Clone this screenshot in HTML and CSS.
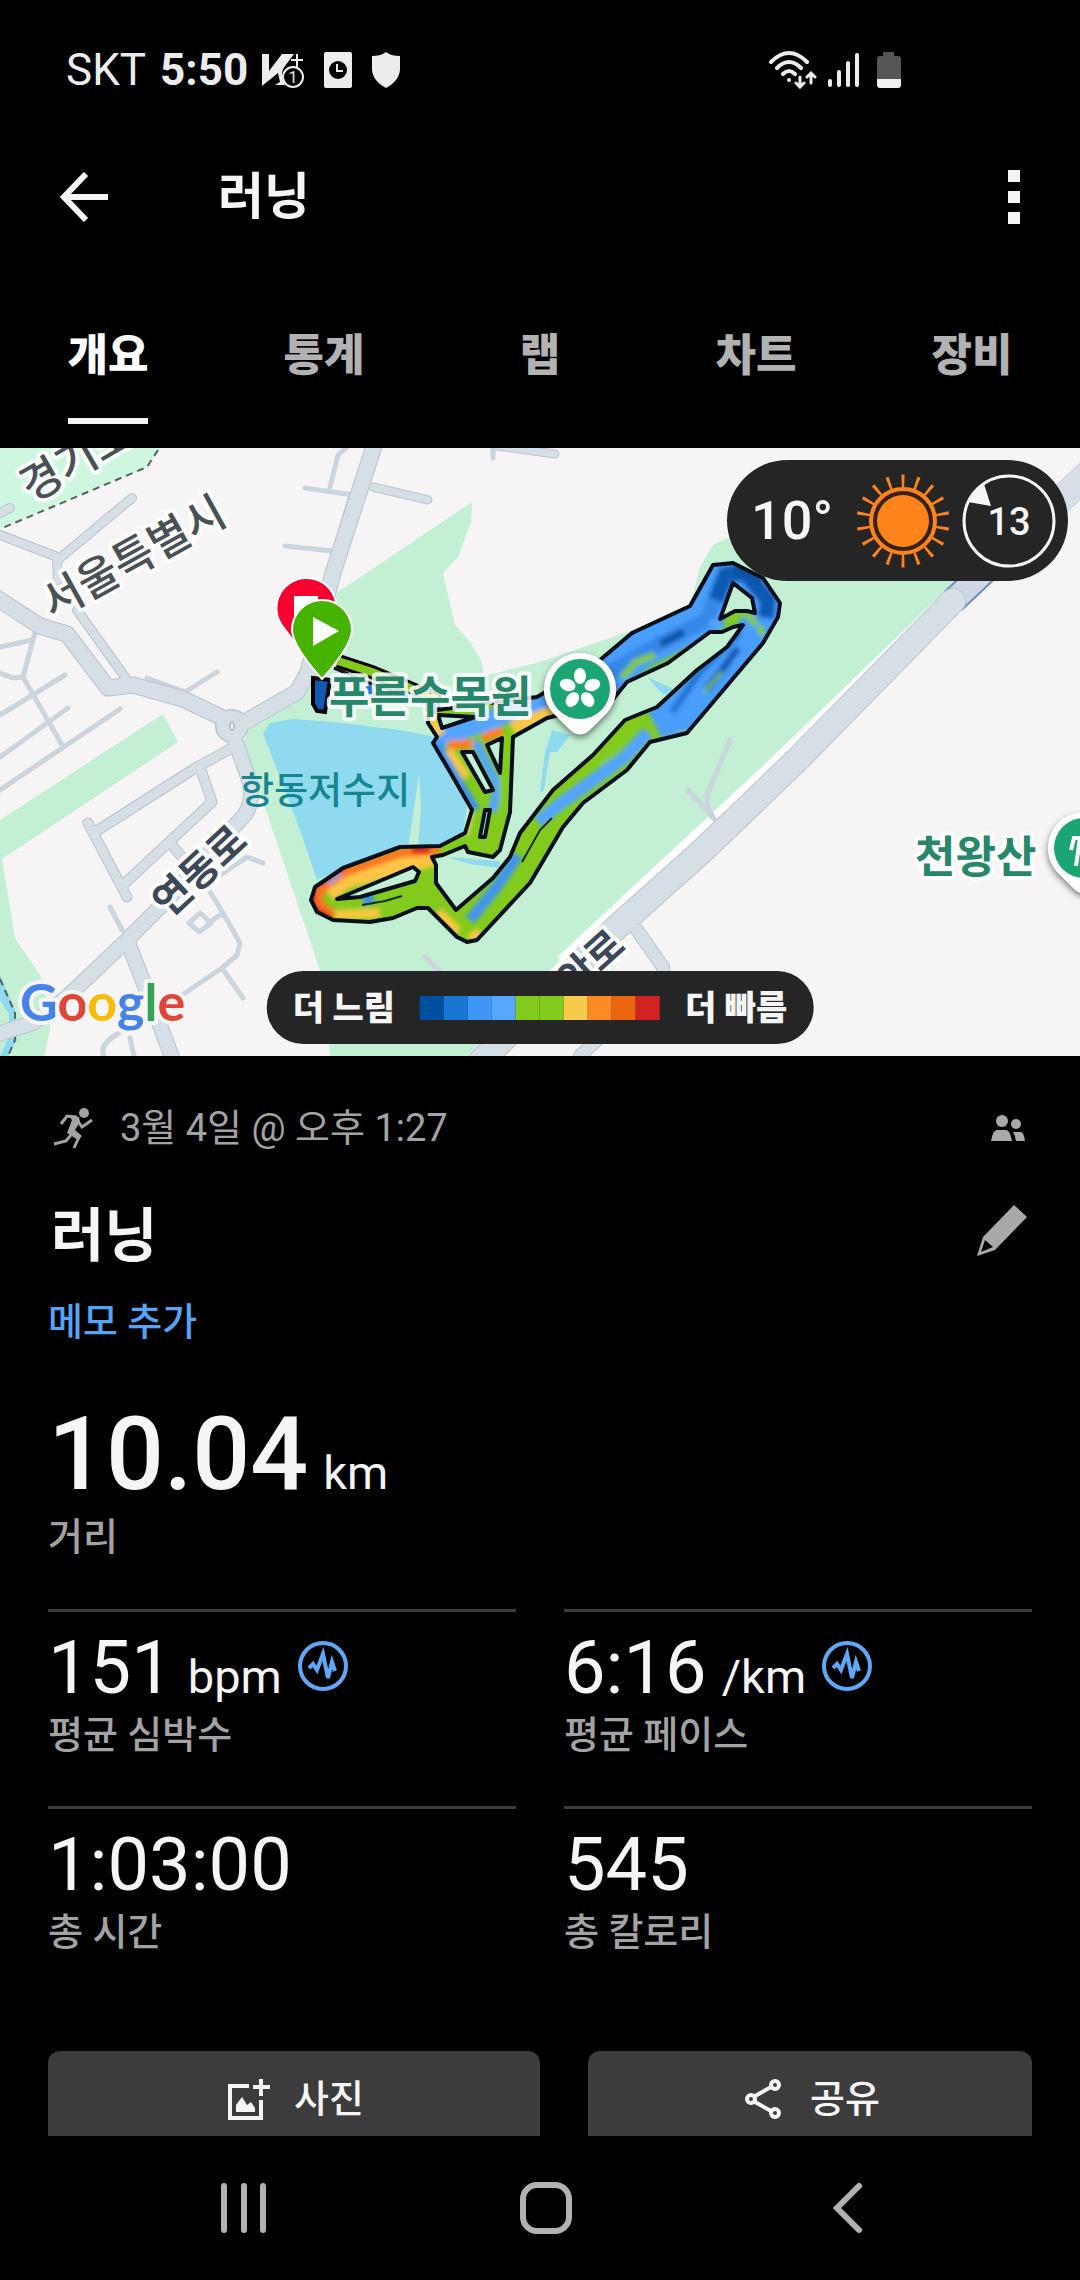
FILE: index.html
```html
<!DOCTYPE html>
<html lang="ko">
<head>
  <meta charset="utf-8">
  <meta name="viewport" content="width=device-width, initial-scale=1">
  <title>러닝</title>
  <link rel="stylesheet" href="styles.css">
</head>
<body>
  <div class="status-bar">
    <span class="carrier">SKT</span>
    <span class="clock">5:50</span>
    <svg class="status-icon" width="42" height="36" viewBox="0 0 42 36">
      <path d="M0 2h7v17L20 2h12L23 14c-3 4-4 9-2 14l2 5H13l5-3-2-9L0 34z" fill="#ececec"/>
      <path d="M35 2v13M29 8h12" stroke="#ececec" stroke-width="2"/>
      <circle cx="31" cy="25" r="10" fill="#000" stroke="#ececec" stroke-width="2"/>
      <text class="badge-text" x="31" y="31">1</text>
    </svg>
    <svg class="status-icon" width="28" height="36" viewBox="0 0 28 36">
      <rect width="28" height="36" rx="2" fill="#ececec"/>
      <circle cx="14" cy="18" r="9" fill="#000"/>
      <path d="M13 12v7h6" fill="none" stroke="#ececec" stroke-width="2"/>
    </svg>
    <svg class="status-icon" width="28" height="36" viewBox="0 0 28 36">
      <path d="M14 0c4 3 9 4 14 4v13c0 8-6 15-14 19C6 32 0 25 0 17V4c5 0 10-1 14-4z" fill="#ececec"/>
    </svg>
    <div class="status-right">
      <svg width="48" height="38" viewBox="0 0 48 38">
        <g fill="none" stroke="#ececec" stroke-width="4" stroke-linecap="round">
          <path d="M2 11Q20-7 38 11M8 17Q20 5 32 17M14 23Q20 17 26 23"/>
          <path d="M31 26v9M27 32l4 4 4-4M42 32V23M38 26l4-4 4 4" stroke-width="3"/>
        </g>
        <circle cx="20" cy="29" r="2" fill="#ececec"/>
      </svg>
      <svg width="34" height="38" viewBox="0 0 34 38">
        <path d="M3 30v4M12 21v13M21 12v22M30 4v30" stroke="#ececec" stroke-width="4" stroke-linecap="round"/>
      </svg>
      <svg class="battery" width="24" height="38" viewBox="0 0 24 38">
        <path d="M6 1h11v4h4q3 0 3 3v20H0V8q0-3 3-3h3z" fill="#555"/>
        <path d="M0 28h24v6q0 3-3 3H3q-3 0-3-3z" fill="#f0f0f0"/>
      </svg>
    </div>
  </div>

  <header class="app-bar">
    <button type="button" class="icon-btn" aria-label="뒤로">
      <svg width="48" height="50" viewBox="0 0 48 50">
        <path d="M26 2L4 25l22 23M4 25h44" fill="none" stroke="#f5f5f5" stroke-width="6"/>
      </svg>
    </button>
    <h1>러닝</h1>
    <button type="button" class="icon-btn" aria-label="메뉴">
      <svg width="12" height="54" viewBox="0 0 12 54">
        <path d="M0 0h12v12H0zM0 21h12v12H0zM0 42h12v12H0z" fill="#f5f5f5"/>
      </svg>
    </button>
  </header>

  <nav class="tabs">
    <a href="#overview" class="active">개요</a>
    <a href="#stats">통계</a>
    <a href="#laps">랩</a>
    <a href="#charts">차트</a>
    <a href="#gear">장비</a>
  </nav>

  <main>
    <div class="map">
      <svg class="map-canvas" viewBox="0 448 1080 608">
        <defs>
          <path id="route" clip-rule="evenodd" fill-rule="evenodd" d="M428 717L437 710L537 697L600 660L632 633L690 606L713 565L733 563L763 578L780 603L778 617L763 643L687 733L650 742L627 770L583 803L563 827L530 883L477 940L467 942L457 937L428 908L417 908L393 918L370 922L333 920L317 912L311 900L315 887L343 868L400 847L440 846L465 833L472 810L453 777L433 743L437 737L428 723Z
            M733 583L752 598L755 613L747 611L735 611L720 619Z
            M743 625L733 627L722 632L710 632L668 663L627 682L610 703L547 718L513 737L510 812L500 850L493 857L468 852L465 846L443 855L432 857L436 865L436 883L456 910L493 878L510 857L520 833L553 790L593 755L625 720L657 707L697 670L727 647Z
            M337 899L413 867L419 872L415 881L360 897Z M490 810L485 810L480 837L485 837Z
            M462 752L473 752L493 790L485 792Z M487 745L502 738L500 773Z M438 715L475 717L442 728Z"/>
          <clipPath id="routeClip"><use href="#route"/></clipPath>
          <filter id="blend" x="-5%" y="-5%" width="110%" height="110%"><feGaussianBlur stdDeviation="2"/></filter>
        </defs>

        <rect y="448" width="1080" height="608" fill="#f6f4f5"/>

        <!-- parks and water -->
        <path d="M0 448H160L157 454L147 467L0 529Z" fill="#cff6df"/>
        <path d="M163 714L178 742L2 859L15 938L40 975L50 1010V1030L44 1056H0V820Z" fill="#c3f0d4"/>
        <path d="M338 592L472 502L471 522L458 557L443 573L455 625L470 642L482 662L484 676L540 662L627 632L690 606L700 567L713 545L727 538L960 560V582L775 760L560 960L467 1056H330L320 970L243 743L253 723L300 698L312 670Z" fill="#c3f0d4"/>
        <path d="M263 733L270 723L293 719L333 722L400 730L435 737L467 807L463 835L440 845L400 847L317 880L300 830Z" fill="#8fdaee"/>
        <path d="M419 775L408 848H418L421 810Z" fill="#c3f0d4"/>
        <path d="M647 677L676 690L663 695ZM552 730L570 735L557 752H550L544 790L540 792L545 752ZM447 857L500 861V868L470 864ZM0 975L15 1010L17 1040L8 1056H0L9 1036V1014L0 1000Z" fill="#8fdaee"/>
        <path d="M158 450L147 467L0 529M0 979L15 1013V1040L8 1056" fill="none" stroke="#54645c" stroke-width="2" stroke-dasharray="7 5"/>

        <!-- streets -->
        <path d="M961 581L775 760L560 960" fill="none" stroke="#fff" stroke-width="8"/>
        <path d="M953 601L1090 472" stroke="#6f8fbd" stroke-width="27"/>
        <path d="M953 601L1090 472" stroke="#cfd6e4" stroke-width="23"/>
        <path d="M1055 505L1090 472" stroke="#d6dfe6" stroke-width="27"/>
        <path d="M425 957L450 982" class="alleys" stroke-width="13"/>
        <g class="alleys">
          <path d="M348 446L338 455L330 487M305 488L353 495M350 498L328 573M285 546L333 551M493 446V458"/>
          <path d="M147 678L185 692L217 672M37 625L23 677L62 745M0 647L32 640M0 673L13 678L23 677M0 715L65 675M0 757L68 708M0 790L120 709"/>
          <path d="M110 907L122 930M207 887L223 913L240 943L237 955L222 968L182 995M222 968L243 998M222 914L208 923M200 913L211 923L199 932L189 923ZM213 880L247 857L263 863M119 1033Q98 1045 104 1056M134 1056L130 1038"/>
          <path d="M730 740L708 793Q705 807 715 820M688 790L713 818"/>
        </g>
        <g class="street-edge">
          <path d="M10 508L-10 518M-5 533L60 558L132 498M57 560L58 580M77 610L130 684" stroke-width="10"/>
          <path d="M373 487L428 500M497 446L555 454" stroke-width="9"/>
          <path d="M88 823L127 897M95 832L197 767L232 748M200 767L212 802L123 885M170 843L182 857" stroke-width="11"/>
          <path d="M-5 597L40 626L67 634L108 688L133 685L183 699L227 720M245 722L297 692L308 672L333 573L376 440" stroke-width="17"/>
          <path d="M235 740L250 783Q254 808 240 820L167 900L127 940L67 997L33 1023L-5 1035M127 940L157 1017L173 1060" stroke-width="16"/>
          <path d="M637 930L663 967Q665 975 655 985L580 1056" stroke-width="14"/>
          <path d="M953 601L797 760L700 853L617 927L480 1062" stroke-width="26"/>
          <circle cx="232" cy="726" r="9" stroke-width="16"/>
        </g>
        <g class="streets">
          <path d="M10 508L-10 518M-5 533L60 558L132 498M57 560L58 580M77 610L130 684" stroke-width="8"/>
          <path d="M373 487L428 500M497 446L555 454" stroke-width="7"/>
          <path d="M88 823L127 897M95 832L197 767L232 748M200 767L212 802L123 885M170 843L182 857" stroke-width="9"/>
          <path d="M-5 597L40 626L67 634L108 688L133 685L183 699L227 720M245 722L297 692L308 672L333 573L376 440" stroke-width="15"/>
          <path d="M235 740L250 783Q254 808 240 820L167 900L127 940L67 997L33 1023L-5 1035M127 940L157 1017L173 1060" stroke-width="14"/>
          <path d="M637 930L663 967Q665 975 655 985L580 1056" stroke-width="12"/>
          <path d="M953 601L797 760L700 853L617 927L480 1062" stroke-width="24"/>
          <circle cx="232" cy="726" r="9" stroke-width="13"/>
        </g>
        <ellipse cx="232" cy="726" rx="2" ry="4" fill="#f6f4f5" stroke="#b9c4ce" stroke-width="2"/>

        <!-- run track -->
        <path d="M313 678L313 704L317 711L325 712L330 680Z" fill="#1058b0" stroke="#000" stroke-width="4"/>
        <path d="M338 661L372 672L434 698L432 712" class="track-edge"/>
        <path d="M338 661L372 672L434 698L432 712" class="track-green"/>
        <path d="M334 668L372 684L430 702" fill="none" stroke="#111" stroke-width="3"/>
        <path d="M368 686L374 697M398 692L440 708" stroke="#2a72d8" stroke-width="6"/>
        <use href="#route" fill="#82cb1d"/>
        <g clip-path="url(#routeClip)">
          <g class="pace" filter="url(#blend)">
            <path d="M540 705L600 680L640 648L700 618L722 585L735 575L765 596L766 620L740 655L688 708L655 725" stroke="#4a9dfb" stroke-width="42"/>
            <path d="M610 672L640 655L690 628L707 620L725 572L740 572" stroke="#3588e8" stroke-width="15"/>
            <path d="M716 600L726 575L745 573L768 600L766 618" stroke="#0e5ab4" stroke-width="16"/>
            <path d="M735 566L762 580" stroke="#07509f" stroke-width="10"/>
            <path d="M660 644L684 632" stroke="#0b55ad" stroke-width="8"/>
            <path d="M738 648L722 670L706 690" stroke="#0b55ad" stroke-width="7"/>
            <path d="M740 632L700 672L672 712" stroke="#2375d4" stroke-width="7"/>
            <path d="M710 622L724 628" stroke="#54a5ff" stroke-width="8"/>
            <path d="M622 678L636 662L655 655M728 617L738 612L750 616L756 625M760 626L762 635" stroke="#82cb1d" stroke-width="7"/>
            <path d="M722 672L704 692" stroke="#82cb1d" stroke-width="3"/>
            <path d="M688 733L650 746" stroke="#82cb1d" stroke-width="7"/>
            <path d="M648 732L625 757L585 786L560 804L538 822" stroke="#54a5ff" stroke-width="13"/>
            <path d="M620 742L598 762" stroke="#82cb1d" stroke-width="11"/>
            <path d="M518 855L498 885L470 920" stroke="#4395f0" stroke-width="11"/>
            <path d="M432 740L490 720L550 697" stroke="#54a5ff" stroke-width="20"/>
            <path d="M430 715L440 735" stroke="#f8cb48" stroke-width="11"/>
            <path d="M512 728L560 710" stroke="#f9c740" stroke-width="14"/>
            <path d="M448 745L475 744M483 738L503 731" stroke="#ff7d19" stroke-width="9"/>
            <path d="M436 742L450 768L476 810" stroke="#3e93f5" stroke-width="9"/>
            <path d="M449 750L467 777" stroke="#f5c544" stroke-width="8"/>
            <path d="M475 741L498 786L492 812" stroke="#54a5ff" stroke-width="9"/>
            <path d="M506 735V825" stroke="#82cb1d" stroke-width="13"/>
            <path d="M472 812L466 835" stroke="#f7c58f" stroke-width="4"/>
            <path d="M328 893L345 880L435 857" stroke="#fdc546" stroke-width="18"/>
            <path d="M333 915L318 903L321 889L345 872L400 853L440 850" stroke="#ff7421" stroke-width="9"/>
            <path d="M333 920L313 907L313 887L343 868" stroke="#e0281e" stroke-width="6"/>
            <path d="M412 850L430 850" stroke="#db251c" stroke-width="8"/>
            <path d="M328 884L341 874" stroke="#8aa6e8" stroke-width="4"/>
            <path d="M335 915L380 913" stroke="#f9c740" stroke-width="10"/>
            <path d="M363 900L373 897" stroke="#3a8ff0" stroke-width="12"/>
            <path d="M438 912L458 932M470 940L480 932" stroke="#f9c740" stroke-width="10"/>
          </g>
        </g>
        <use href="#route" class="route-line"/>
        <path d="M362 905L385 901L402 896M522 862L540 830L552 818" fill="none" stroke="#1b2a10" stroke-width="2"/>

        <!-- place names -->
        <g class="place">
          <text class="district" text-anchor="middle" transform="translate(84 473) rotate(-30)">경기도</text>
          <text class="district" text-anchor="middle" transform="translate(141 571) rotate(-29)">서울특별시</text>
          <text class="street-name" text-anchor="middle" transform="translate(209 881) rotate(-43)">연동로</text>
          <text class="street-name" text-anchor="middle" transform="translate(600 973) rotate(-42)">안로</text>
          <text class="poi" x="329" y="713">푸른수목원</text>
          <text class="poi" x="915" y="873">천왕산</text>
          <text class="lake" x="240" y="804">항동저수지</text>
        </g>

        <!-- place pins -->
        <g class="pin">
          <path d="M580 653a36 36 0 0 1 27 60L590 730q-10 9-20 0L553 713a36 36 0 0 1 27-60z" fill="#fff"/>
          <path d="M1084 812a36 36 0 0 1 27 60L1094 889q-10 9-20 0L1057 872a36 36 0 0 1 27-60z" fill="#fff"/>
        </g>
        <circle cx="580" cy="689" r="30" fill="#1ba572"/>
        <g fill="#fff">
          <ellipse id="petal" cx="580" cy="676" rx="6" ry="8"/>
          <use href="#petal" transform="rotate(72 580 689)"/>
          <use href="#petal" transform="rotate(144 580 689)"/>
          <use href="#petal" transform="rotate(216 580 689)"/>
          <use href="#petal" transform="rotate(288 580 689)"/>
        </g>
        <circle cx="1084" cy="848" r="30" fill="#1ba572"/>
        <path d="M1071 850L1074 838H1080L1076 866" fill="none" stroke="#fff" stroke-width="4"/>

        <!-- finish and start -->
        <path d="M306 578a30 30 0 0 1 26 46L306 658L281 624a30 30 0 0 1 25-46z" fill="#f8002f" stroke="#fff" stroke-width="2"/>
        <rect x="294" y="596" width="24" height="24" fill="#fff"/>
        <path d="M322 600a30 30 0 0 1 30 31Q350 648 322 679Q294 648 292 631a30 30 0 0 1 30-31z" fill="#45b300" stroke="#fff" stroke-width="2"/>
        <path d="M313 617V646L339 631Z" fill="#fff"/>

        <text class="google" x="20" y="1021"><tspan fill="#4583ec">G</tspan><tspan fill="#df4638">o</tspan><tspan fill="#f7bb09">o</tspan><tspan fill="#4583ec">g</tspan><tspan fill="#37a455">l</tspan><tspan fill="#df4638">e</tspan></text>
      </svg>

      <div class="weather">
        <span class="temp">10°</span>
        <svg width="94" height="94" viewBox="-47 -47 94 94">
          <circle r="26" fill="#ff831b"/>
          <circle r="28" fill="none" stroke="#3a2108" stroke-width="3"/>
          <circle r="32" fill="none" stroke="#ff831b" stroke-width="4"/>
          <circle r="40" fill="none" stroke="#ff831b" stroke-width="13" pathLength="180" stroke-dasharray="2 8" stroke-dashoffset="6"/>
        </svg>
        <div class="wind">
          <svg width="94" height="94" viewBox="-47 -47 94 94">
            <circle r="45" fill="none" stroke="#f5f5f5" stroke-width="3"/>
            <path d="M-25-37L-18-15L-41-19Q-36-30-25-37z" fill="#f5f5f5"/>
          </svg>
          <span>13</span>
        </div>
      </div>

      <div class="legend">
        <span>더 느림</span>
        <div class="scale">
          <i class="s1"></i><i class="s2"></i><i class="s3"></i><i class="s4"></i><i class="s5"></i>
          <i class="s5"></i><i class="s6"></i><i class="s7"></i><i class="s8"></i><i class="s9"></i>
        </div>
        <span>더 빠름</span>
      </div>
    </div>

    <section class="details" id="overview">
      <div class="meta">
        <svg width="44" height="44" viewBox="0 0 44 44">
          <circle cx="33" cy="7" r="5" fill="#a3a3a3"/>
          <path d="M26 11L16 10L10 18M26 14L31 21L41 14M21 27L28 31L23 42M20 29L15 35L3 38" fill="none" stroke="#a3a3a3" stroke-width="3"/>
          <path d="M17 9L28 11L29 16L24 24L31 30L27 34L16 27L21 14Z" fill="#a3a3a3"/>
        </svg>
        <span>3월 4일 @ 오후 1:27</span>
        <svg class="people" width="34" height="26" viewBox="0 0 34 26">
          <g fill="#a9a9a9">
            <circle cx="11" cy="6" r="6"/>
            <circle cx="25" cy="9" r="5"/>
            <path d="M0 26Q2 15 6 15H15Q19 15 21 26zM22 17H30Q33 18 34 26H25Q24 20 22 17z"/>
          </g>
        </svg>
      </div>

      <div class="title-row">
        <h2>러닝</h2>
        <button type="button" class="icon-btn" aria-label="편집">
          <svg width="50" height="52" viewBox="0 0 50 52">
            <path d="M37 1L50 13L18 46L0 52L6 33Z M8 36L4 48L16 43Z" fill="#a9a9a9" fill-rule="evenodd"/>
          </svg>
        </button>
      </div>
      <a href="#memo" class="memo">메모 추가</a>

      <div class="distance">
        <div class="value">10.04 <span class="unit">km</span></div>
        <div class="label">거리</div>
      </div>

      <div class="stats">
        <div class="stat">
          <div class="value">151 <span class="unit">bpm</span>
            <svg class="pulse" width="50" height="50" viewBox="0 0 50 50"><circle cx="25" cy="25" r="23"/><path d="M11 27l4-4 4 6 6-16 5 24 4-16 3 9"/></svg>
          </div>
          <div class="label">평균 심박수</div>
        </div>
        <div class="stat">
          <div class="value">6:16 <span class="unit">/km</span>
            <svg class="pulse" width="50" height="50" viewBox="0 0 50 50"><circle cx="25" cy="25" r="23"/><path d="M11 27l4-4 4 6 6-16 5 24 4-16 3 9"/></svg>
          </div>
          <div class="label">평균 페이스</div>
        </div>
        <div class="stat">
          <div class="value">1:03:00</div>
          <div class="label">총 시간</div>
        </div>
        <div class="stat">
          <div class="value">545</div>
          <div class="label">총 칼로리</div>
        </div>
      </div>

      <div class="actions">
        <button type="button">
          <svg width="48" height="48" viewBox="0 0 48 48">
            <path d="M25 11H6V43H37V25" fill="none" stroke="#f5f5f5" stroke-width="4"/>
            <path d="M37 4V21M29 12H46" stroke="#f5f5f5" stroke-width="4"/>
            <path d="M12 37V30L18 22L23 30L27 27L31 33V37Z" fill="#f5f5f5"/>
          </svg>
          <span>사진</span>
        </button>
        <button type="button">
          <svg width="48" height="48" viewBox="0 0 48 48">
            <g fill="none" stroke="#f5f5f5" stroke-width="4">
              <path d="M15 21L31 12M15 27L31 36"/>
              <circle cx="11" cy="24" r="4"/><circle cx="35" cy="10" r="4"/><circle cx="35" cy="38" r="4"/>
            </g>
          </svg>
          <span>공유</span>
        </button>
      </div>
    </section>
  </main>

  <footer class="nav-bar">
    <button type="button" class="icon-btn" aria-label="최근 앱">
      <svg width="52" height="52" viewBox="0 0 52 52"><path d="M6 4v44M26 4v44M45 4v44" stroke="#b2b2b2" stroke-width="6" stroke-linecap="round"/></svg>
    </button>
    <button type="button" class="icon-btn" aria-label="홈">
      <svg width="52" height="52" viewBox="0 0 52 52"><rect x="3" y="3" width="46" height="46" rx="14" fill="none" stroke="#b2b2b2" stroke-width="6"/></svg>
    </button>
    <button type="button" class="icon-btn" aria-label="뒤로 가기">
      <svg width="52" height="52" viewBox="0 0 52 52"><path d="M37 4L15 26L37 48" fill="none" stroke="#b2b2b2" stroke-width="6" stroke-linecap="round"/></svg>
    </button>
  </footer>
</body>
</html>
```

FILE: styles.css
```css
* { box-sizing: border-box; }
body { margin: 0; height: 100vh; display: flex; flex-direction: column; background: #000; color: #f5f5f5; font-family: Roboto, "Noto Sans CJK KR", sans-serif; overflow: hidden; }
svg { display: block; flex: none; }
h1, h2 { margin: 0; }
a { text-decoration: none; }
button { font-family: inherit; color: inherit; border: none; padding: 0; cursor: pointer; }
.icon-btn { background: none; }

.status-bar { display: flex; align-items: center; gap: 14px; height: 98px; padding: 42px 179px 0 66px; color: #ececec; font-size: 44px; line-height: 56px; flex: none; }
.clock { font-weight: 700; }
.status-icon { margin-right: 6px; }
.badge-text { font-size: 16px; fill: #ececec; text-anchor: middle; }
.status-right { display: flex; align-items: center; gap: 10px; margin-left: auto; }
.battery { margin-left: 6px; }

.app-bar { display: flex; align-items: center; height: 198px; padding: 0 60px; flex: none; }
.app-bar h1 { flex: 1; margin-left: 110px; font-size: 50px; font-weight: 700; line-height: 56px; }

.tabs { display: grid; grid-template-columns: repeat(5, 1fr); justify-items: center; height: 152px; flex: none; }
.tabs a { height: 128px; padding-top: 38px; border-bottom: 6px solid transparent; color: #b2b2b2; font-size: 44px; font-weight: 900; line-height: 44px; }
.tabs .active { color: #fff; border-color: #f5f5f5; }

main { flex: 1; min-height: 0; overflow: hidden; }

.map { position: relative; }
.map-canvas { width: 100%; height: auto; }
.streets { fill: none; stroke: #d6dfe6; stroke-linecap: round; stroke-linejoin: round; }
.street-edge { fill: none; stroke: #b9c4ce; stroke-linecap: round; stroke-linejoin: round; }
.alleys { fill: none; stroke: #cbd5de; stroke-width: 5px; stroke-linecap: round; stroke-linejoin: round; }
.track-edge { fill: none; stroke: #000; stroke-width: 14px; }
.track-green { fill: none; stroke: #82cb1d; stroke-width: 8px; }
.pace { fill: none; stroke-linejoin: round; }
.route-line { fill: none; stroke: #06101a; stroke-width: 4px; stroke-linejoin: round; }
.place { font-weight: 500; stroke: #fff; stroke-width: 8px; stroke-opacity: 0.85; stroke-linejoin: round; paint-order: stroke; }
.district { font-size: 44px; fill: #4a5156; }
.street-name { font-size: 40px; font-weight: 700; fill: #3c4858; }
.poi { font-size: 44px; font-weight: 700; fill: #26876a; }
.lake { font-size: 37px; fill: #15858f; stroke: none; }
.pin { filter: drop-shadow(0 3px 3px rgba(0, 0, 0, 0.5)); }
.google { font-family: Lato, sans-serif; font-size: 52px; font-weight: 700; stroke: #f6f4f5; stroke-width: 8px; stroke-linejoin: round; paint-order: stroke; }

.weather { position: absolute; top: 12px; right: 12px; display: flex; align-items: center; height: 121px; padding: 0 12px 0 24px; border-radius: 61px; background: #252525; }
.temp { width: 105px; font-size: 54px; font-weight: 500; }
.wind { position: relative; margin-left: 12px; }
.wind span { position: absolute; inset: 0; font-size: 38px; font-weight: 500; line-height: 96px; text-align: center; }
.legend { position: absolute; bottom: 12px; left: 50%; transform: translateX(-50%); display: flex; align-items: center; gap: 25px; height: 73px; padding: 0 26px; border-radius: 37px; background: #252525; font-size: 34px; font-weight: 900; line-height: 48px; white-space: nowrap; }
.scale { display: flex; }
.scale i { width: 24px; height: 24px; }
.s1 { background: #004f9f; }
.s2 { background: #1976d2; }
.s3 { background: #3f97f5; }
.s4 { background: #55a7ff; }
.s5 { background: #82cb1d; }
.s6 { background: #f7cb48; }
.s7 { background: #fc8a25; }
.s8 { background: #ea670e; }
.s9 { background: #d32222; }

.details { padding: 48px 48px 0; }
.meta { display: flex; align-items: center; gap: 25px; height: 48px; padding: 0 7px 0 3px; color: #a3a3a3; font-size: 38px; line-height: 48px; }
.people { margin-left: auto; }
.title-row { display: flex; justify-content: space-between; align-items: center; height: 84px; margin-top: 42px; padding: 0 5px 0 3px; }
.title-row h2 { font-size: 58px; font-weight: 700; line-height: 80px; }
.title-row .icon-btn { margin-bottom: 12px; }
.memo { display: block; margin-top: 20px; color: #55a4f5; font-size: 38px; font-weight: 500; line-height: 48px; }

.value { display: flex; align-items: baseline; font-size: 74px; line-height: 80px; }
.unit { margin-left: 15px; font-size: 47px; font-weight: 400; line-height: 48px; }
.label { color: #a3a3a3; font-size: 38px; font-weight: 500; line-height: 48px; }
.distance { margin: 53px 0 48px; }
.distance .value { font-size: 102px; font-weight: 500; line-height: 110px; }
.distance .label { margin-top: 4px; }
.stats { display: grid; grid-template-columns: 1fr 1fr; column-gap: 48px; }
.stat { padding: 16px 0 47px; border-top: 3px solid #3c3c3c; }
.stat .label { margin-top: 3px; }
.pulse { align-self: flex-start; margin: 13px 0 0 16px; fill: none; stroke: #5fa8f8; stroke-width: 4px; }

.actions { display: grid; grid-template-columns: 41fr 37fr; gap: 48px; margin-top: 48px; }
.actions button { display: flex; justify-content: center; align-items: center; gap: 22px; height: 96px; border-radius: 12px; background: #3c3c3c; font-size: 38px; font-weight: 500; line-height: 48px; }

.nav-bar { display: grid; grid-template-columns: repeat(3, 1fr); place-items: center; height: 144px; padding: 0 81px 0 93px; flex: none; }
```
